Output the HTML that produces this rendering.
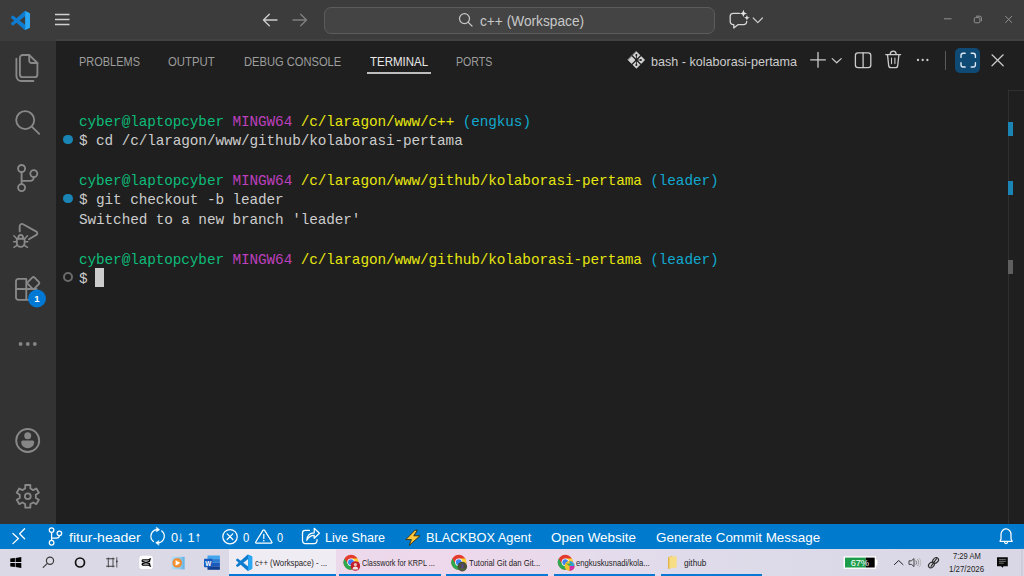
<!DOCTYPE html>
<html lang="en">
<head>
<meta charset="utf-8">
<title>c++ (Workspace)</title>
<style>
html,body{margin:0;padding:0;}
body{width:1024px;height:576px;overflow:hidden;background:#1f1f1f;position:relative;font-family:"Liberation Sans",sans-serif;color:#cccccc;}
.abs{position:absolute;}
.t{position:absolute;white-space:nowrap;transform-origin:0 0;}
.ar{display:inline-block;font-family:"DejaVu Sans",sans-serif;font-size:11.5px;width:6px;transform:scaleX(0.66);transform-origin:0 50%;}
svg{position:absolute;overflow:visible;}
/* title bar */
#title{left:0;top:0;width:1024px;height:40.5px;background:#3c3c3c;}
#search{left:324px;top:6.5px;width:391px;height:27.5px;border:1px solid #5c5c5c;border-radius:7px;background:#444444;box-sizing:border-box;}
/* activity bar */
#act{left:0;top:40.5px;width:55.5px;height:483.5px;background:#333333;}
/* panel */
#panel{left:55.5px;top:40.9px;width:968.5px;height:483.1px;background:#1f1f1f;border-top:0;}
#tabline{left:366.9px;top:72.2px;width:63.8px;height:1.6px;background:#bdbdbd;}
#maxbtn{left:955px;top:48px;width:25px;height:25px;border-radius:5px;background:#0f4a74;}
#sep{left:945px;top:51px;width:1px;height:19px;background:#5a5a5a;}
/* terminal */
.ln{left:79px;height:20px;font-family:"Liberation Mono",monospace;font-size:14.4px;line-height:20px;letter-spacing:-0.11px;white-space:pre;color:#cccccc;}
.g{color:#0dbc79}.m{color:#bc3fbc}.y{color:#e5e510}.c{color:#11a8cd}
.dot{width:9.6px;height:9.6px;border-radius:50%;background:#1a85b4;left:63.2px;}
.dot.o{background:transparent;border:2px solid #6a6a6a;box-sizing:border-box;width:9.8px;height:9.8px;}
#cursor{left:95.4px;top:267.8px;width:8.8px;height:19.6px;background:#cccccc;}
#sbline{left:1008px;top:90px;width:1px;height:434px;background:#303031;}
.mk{left:1008px;width:5px;height:14px;background:#1a85b4;}
/* status bar */
#status{left:0;top:524px;width:1024px;height:25px;background:#007acc;}
/* task bar */
#task{left:0;top:549px;width:1024px;height:27px;background:linear-gradient(90deg,#dbd9e6 0px,#dcd9e7 225px,#ecd9eb 340px,#eed8ec 450px,#e9daeb 550px,#e4dcec 600px,#dfdbea 700px,#dcdae8 800px,#d9d7e5 1024px);}
.ul{top:574px;height:2px;background:#0a78d4;}
</style>
</head>
<body>
<!-- TITLE BAR -->
<div id="title" class="abs"></div>
<div class="abs" style="left:55.5px;top:39.4px;width:968.5px;height:1.6px;background:#424242"></div>
<div id="search" class="abs"></div>

<!-- ACTIVITY BAR -->
<div id="act" class="abs"></div>

<!-- PANEL -->
<div id="panel" class="abs"></div>
<div id="tabline" class="abs"></div>
<div id="sep" class="abs"></div>
<div id="maxbtn" class="abs"></div>

<!-- TERMINAL -->
<div class="abs ln" style="top:112px"><span class="g">cyber@laptopcyber</span> <span class="m">MINGW64</span> <span class="y">/c/laragon/www/c++</span> <span class="c">(engkus)</span></div>
<div class="abs ln" style="top:131px">$ cd /c/laragon/www/github/kolaborasi-pertama</div>
<div class="abs ln" style="top:171px"><span class="g">cyber@laptopcyber</span> <span class="m">MINGW64</span> <span class="y">/c/laragon/www/github/kolaborasi-pertama</span> <span class="c">(leader)</span></div>
<div class="abs ln" style="top:190px">$ git checkout -b leader</div>
<div class="abs ln" style="top:210px">Switched to a new branch 'leader'</div>
<div class="abs ln" style="top:250px"><span class="g">cyber@laptopcyber</span> <span class="m">MINGW64</span> <span class="y">/c/laragon/www/github/kolaborasi-pertama</span> <span class="c">(leader)</span></div>
<div class="abs ln" style="top:269px">$</div>
<div id="cursor" class="abs"></div>
<div class="abs dot" style="top:134.9px"></div>
<div class="abs dot" style="top:193.9px"></div>
<div class="abs dot o" style="top:272.1px;left:63.4px"></div>
<div id="sbline" class="abs"></div>
<div class="abs" style="left:1008px;top:89.5px;width:16px;height:1px;background:#303031"></div>
<div class="abs mk" style="top:122px"></div>
<div class="abs mk" style="top:181px"></div>
<div class="abs mk" style="top:260px;background:#5f5f5f"></div>


<!-- ICONS: title + activity bar -->
<svg width="1024" height="576" viewBox="0 0 1024 576" style="left:0;top:0" fill="none" stroke-linecap="round" stroke-linejoin="round">
<!-- vscode logo -->
<g transform="translate(11,11) scale(0.19)">
<path d="M96.46 10.8 75.86.88a6.23 6.23 0 0 0-7.1 1.2L29.33 38.04 12.15 25a4.16 4.16 0 0 0-5.32.24L1.32 30.25a4.17 4.17 0 0 0 0 6.16L16.21 50 1.32 63.59a4.17 4.17 0 0 0 0 6.16l5.51 5.01a4.16 4.16 0 0 0 5.32.24l17.18-13.04 39.43 35.96a6.22 6.22 0 0 0 7.1 1.2l20.6-9.9A6.25 6.25 0 0 0 100 83.57V16.43a6.25 6.25 0 0 0-3.54-5.63ZM75 72.7 45.07 50 75 27.3Z" fill="#0f7ccf" fill-rule="evenodd"/>
<path d="M75 .5 96.46 10.8A6.25 6.25 0 0 1 100 16.43V83.57a6.25 6.25 0 0 1-3.54 5.63L75 99.5Z" fill="#2aa8f4"/>
</g>
<!-- hamburger -->
<g stroke="#cfcfcf" stroke-width="1.3" stroke-linecap="butt"><path d="M55 14.5H69.5M55 19.5H69.5M55 24.5H69.5"/></g>
<!-- arrows -->
<path d="M277 20H263.5M269.3 14.2L263.5 20L269.3 25.8" stroke="#cccccc" stroke-width="1.4"/>
<path d="M293 20H306.5M300.7 14.2L306.5 20L300.7 25.8" stroke="#7f7f7f" stroke-width="1.4"/>
<!-- search icon -->
<circle cx="464.5" cy="18.6" r="5" stroke="#c8c8c8" stroke-width="1.2"/>
<path d="M468.2 22.4L472 26" stroke="#c8c8c8" stroke-width="1.2"/>
<!-- copilot chat -->
<path d="M739.5 13.3H733.2a3 3 0 0 0 -3 3V21.6a3 3 0 0 0 3 3H733.8V28L738.2 24.6H743.7a3 3 0 0 0 3 -3V21.5" stroke="#d6d6d6" stroke-width="1.3"/>
<path d="M743.4 9.8L744.4 12.4L747 13.4L744.4 14.4L743.4 17L742.4 14.4L739.8 13.4L742.4 12.4Z" fill="#e4e4e4"/>
<path d="M746.9 15L747.7 17L749.7 17.8L747.7 18.6L746.9 20.6L746.1 18.6L744.1 17.8L746.1 17Z" fill="#e4e4e4"/>
<path d="M753.2 18L757.8 22.6L762.4 18" stroke="#cccccc" stroke-width="1.2"/>
<!-- window controls -->
<g stroke="#909090" stroke-width="1" stroke-linecap="butt">
<path d="M944 18.8H951.5"/>
<rect x="974.3" y="17.6" width="5.6" height="5.2" rx="1"/>
<path d="M976 16.2H980a1.4 1.4 0 0 1 1.4 1.4V21.3"/>
<path d="M1005.3 16L1012 22.8M1012 16L1005.3 22.8"/>
</g>
<!-- ACTIVITY BAR -->
<g stroke="#898989" stroke-width="1.85">
<!-- files -->
<path d="M22.6 55H29.2L37.4 63V74.4a2.7 2.7 0 0 1 -2.7 2.7H22.6a2.7 2.7 0 0 1 -2.7 -2.7V57.7a2.7 2.7 0 0 1 2.7 -2.7Z"/>
<path d="M29.2 55V60.6a2.4 2.4 0 0 0 2.4 2.4H37.4"/>
<path d="M16.4 58.6V76a5 5 0 0 0 5 5H33.4"/>
<!-- search -->
<circle cx="25.2" cy="120.1" r="9"/>
<path d="M31.8 126.6L39.2 133.8"/>
<!-- scm -->
<circle cx="21.6" cy="168.5" r="3.5"/><circle cx="21.6" cy="187.6" r="3.5"/><circle cx="33.8" cy="173.6" r="3.5"/>
<path d="M21.6 172V184.1M33.8 177.1V177.6a3.3 3.3 0 0 1 -3.3 3.3H21.6"/>
<!-- debug -->
<path d="M19.7 231.4V226.2a2.3 2.3 0 0 1 3.4 -2L36.4 231.6a1.9 1.9 0 0 1 0 3.3L28.9 239.2"/>
<path d="M16.8 238.7H24.6V242.7a3.9 4.2 0 0 1 -7.8 0Z"/>
<path d="M18.4 238.5V237.4a2.3 2.6 0 0 1 4.6 0V238.5"/>
<path d="M16.8 238.7L13.9 235.7M16.7 241.7H13.6M17.4 245.1L13.9 247.4M24.6 238.7L27.5 235.7M24.7 241.7H27.8M24 245.1L27.5 247.4" stroke-width="1.5"/>
<!-- extensions -->
<path d="M26.3 278.9H18.2a2.2 2.2 0 0 0 -2.2 2.2V297.6a2.2 2.2 0 0 0 2.2 2.2H34.3a2.2 2.2 0 0 0 2.2 -2.2V289H16M26.3 278.9V299.8"/>
<path d="M32.2 277.6a1.7 1.7 0 0 1 2.4 0L38.8 281.8a1.7 1.7 0 0 1 0 2.4L34.6 288.4a1.7 1.7 0 0 1 -2.4 0L28 284.2a1.7 1.7 0 0 1 0 -2.4Z"/>
<!-- account -->
<circle cx="27.7" cy="440.5" r="11.5"/>
<!-- gear -->
<path d="M25.18 488.53 L25.27 484.98 L30.33 484.98 L30.42 488.53 L33.22 490.15 L36.34 488.45 L38.87 492.83 L35.84 494.68 L35.84 497.92 L38.87 499.77 L36.34 504.15 L33.22 502.45 L30.42 504.07 L30.33 507.62 L25.27 507.62 L25.18 504.07 L22.38 502.45 L19.26 504.15 L16.73 499.77 L19.76 497.92 L19.76 494.68 L16.73 492.83 L19.26 488.45 L22.38 490.15 Z"/>
<circle cx="27.8" cy="496.3" r="2.9"/>
</g>
<g fill="#868686">
<circle cx="27.7" cy="435.8" r="3.5"/>
<path d="M21.2 442a1.5 1.5 0 0 1 1.5 -1.5H32.7a1.5 1.5 0 0 1 1.5 1.5V442.2a6.5 6 0 0 1 -13 0Z"/>
<circle cx="20.6" cy="344" r="1.9"/><circle cx="27.8" cy="344" r="1.9"/><circle cx="34.8" cy="344" r="1.9"/>
</g>
<circle cx="37" cy="298.5" r="9" fill="#0078d4"/>
<text x="37" y="301.9" font-family="Liberation Sans, sans-serif" font-weight="bold" font-size="9.5" fill="#ffffff" text-anchor="middle">1</text>
</svg>


<!-- ICONS: panel actions + status bar -->
<svg width="1024" height="576" viewBox="0 0 1024 576" style="left:0;top:0" fill="none" stroke-linecap="round" stroke-linejoin="round">
<!-- terminal (git bash) icon -->
<path d="M636.4 51.8L644.6 60L636.4 68.2L628.2 60Z" fill="#d4d4d4" stroke="#d4d4d4" stroke-width="0.8"/>
<g stroke="#1f1f1f" stroke-width="1.25" stroke-linecap="butt">
<path d="M631.9 55.5L640.9 64.5M640.9 55.5L631.9 64.5"/>
<path d="M636.4 54.4V65.6M636.4 60L640.6 60" stroke-width="0.9"/>
</g>
<g fill="#1f1f1f"><circle cx="636.4" cy="55" r="1"/><circle cx="636.4" cy="65" r="1"/><circle cx="640.9" cy="60" r="1"/><circle cx="636.4" cy="60" r="1.2"/></g>
<g stroke="#cccccc" stroke-width="1.3">
<!-- plus -->
<path d="M818 52.4V67.2M810.6 59.8H825.4"/>
<!-- chevron -->
<path d="M832.2 58.6L836.7 62.8L841.2 58.6" stroke-width="1.2"/>
<!-- split -->
<rect x="855.4" y="52.8" width="15.4" height="14.8" rx="2.6"/>
<path d="M863.1 52.8V67.6"/>
<!-- trash -->
<path d="M885.8 54.6H900.6M890.2 54.4a3 3.2 0 0 1 6 0"/>
<path d="M887.5 54.8L888.7 65.6a2.2 2.2 0 0 0 2.2 2H895.5a2.2 2.2 0 0 0 2.2 -2L898.9 54.8"/>
<path d="M891.5 58V63.6M894.9 58V63.6" stroke-width="1.1"/>
<!-- close -->
<path d="M992 54.8L1003.2 65.8M1003.2 54.8L992 65.8" stroke-width="1.2"/>
</g>
<g fill="#cccccc"><circle cx="918" cy="60" r="1.15"/><circle cx="922.7" cy="60" r="1.15"/><circle cx="927.4" cy="60" r="1.15"/></g>
<!-- maximize corners -->
<g stroke="#dbe8f2" stroke-width="1.4">
<path d="M961 57.4V55.4a2.2 2.2 0 0 1 2.2 -2.2H965.2"/>
<path d="M971.2 53.2H973.2a2.2 2.2 0 0 1 2.2 2.2V57.4"/>
<path d="M975.4 62.8V64.8a2.2 2.2 0 0 1 -2.2 2.2H971.2"/>
<path d="M965.2 67H963.2a2.2 2.2 0 0 1 -2.2 -2.2V62.8"/>
</g>
</svg>

<!-- STATUS BAR -->
<div id="status" class="abs"></div>


<svg width="1024" height="576" viewBox="0 0 1024 576" style="left:0;top:0" fill="none" stroke-linecap="round" stroke-linejoin="round">
<g stroke="#ffffff" stroke-width="1.25">
<!-- remote -->
<path d="M12.9 533.5L18.4 538.5L12.9 543.6M24.6 528.7L19.6 533.7L24.6 538.8"/>
<!-- branch -->
<circle cx="51.6" cy="530.1" r="2.3"/><circle cx="51.6" cy="542.7" r="2.3"/><circle cx="59.4" cy="533.3" r="2.3"/>
<path d="M51.6 532.5V540.3M59.4 535.7a3 2.4 0 0 1 -3 2.3H51.6"/>
<!-- sync -->
<path d="M153.48 541.48A6.7 6.7 0 0 1 156.67 529.57M161.72 530.92A6.7 6.7 0 0 1 158.53 542.83"/>
<path d="M156.60 527.30L159.60 529.70L156.60 531.70Z" fill="#ffffff" stroke-width="0.5"/>
<path d="M158.60 540.70L155.60 542.70L158.60 545.10Z" fill="#ffffff" stroke-width="0.5"/>
<!-- error -->
<circle cx="230" cy="536.7" r="7.2"/>
<path d="M227.2 533.9L232.8 539.5M232.8 533.9L227.2 539.5"/>
<!-- warning -->
<path d="M263.1 530.2a0.8 0.8 0 0 1 1.4 0L271.9 542a0.7 0.7 0 0 1 -0.6 1.1H256.3a0.7 0.7 0 0 1 -0.6 -1.1Z"/>
<path d="M263.8 534.4V538.6"/>
<!-- live share -->
<path d="M309.4 530.4H305.2a2.7 2.7 0 0 0 -2.7 2.7V540.8a2.7 2.7 0 0 0 2.7 2.7H314.3a2.7 2.7 0 0 0 2.7 -2.7V539.6"/>
<path d="M306.8 540.3C307.2 535.4 310.4 532.9 314.2 532.9V528.3L319.4 533.2L314.2 538.3V535.4C311 535.4 308.6 537 306.8 540.3Z"/>
<!-- bell -->
<path d="M1000 541.3H1012.2L1011 539V535a5 5.6 0 0 0 -10 -1V539Z"/>
<path d="M1004.6 542.4a1.5 1.5 0 0 0 2.9 0"/>
</g>
<circle cx="263.8" cy="540.7" r="0.8" fill="#ffffff"/>
<!-- lightning -->
<path d="M414.8 530.4L405.8 539.6H411.4L409.2 545.4L420 535.8H413.8L417.2 530.4Z" fill="#ffc83d" stroke="#3a2c08" stroke-width="0.9"/>
</svg>

<!-- TASK BAR -->
<div id="task" class="abs"></div>
<div class="abs" style="left:229px;top:549px;width:107px;height:27px;background:#f0ecf4"></div>
<div class="abs ul" style="left:229px;width:107px"></div>
<div class="abs ul" style="left:339px;width:101.5px"></div>
<div class="abs ul" style="left:446px;width:101.8px"></div>
<div class="abs ul" style="left:553.7px;width:101px"></div>
<div class="abs ul" style="left:660.7px;width:101.3px"></div>
<svg width="1024" height="576" viewBox="0 0 1024 576" style="left:0;top:0" fill="none" stroke-linecap="round" stroke-linejoin="round">
<!-- windows logo -->
<g fill="#000000">
<polygon points="10.3,558.6 14.9,558 14.9,562.1 10.3,562.1"/>
<polygon points="15.6,557.9 21.3,557 21.3,562.1 15.6,562.1"/>
<polygon points="10.3,562.9 14.9,562.9 14.9,567 10.3,566.4"/>
<polygon points="15.6,562.9 21.3,562.9 21.3,568 15.6,567.1"/>
</g>
<!-- search -->
<circle cx="50" cy="560.7" r="3.6" stroke="#3c3c3c" stroke-width="1.2"/>
<path d="M47.4 563.4L43.2 567.4" stroke="#3c3c3c" stroke-width="1.2"/>
<!-- cortana -->
<circle cx="80" cy="562.5" r="4.5" stroke="#111111" stroke-width="1.7"/>
<!-- task view -->
<g stroke="#3a3a3a" stroke-width="1.1" stroke-linecap="butt">
<path d="M106.2 558.7H114.6M106.2 566.2H114.6"/>
<path d="M108.3 557.6V567.3M113 557.6V567.3" stroke-width="0.9"/>
<path d="M116.8 557.2V567.5" stroke-width="0.8"/>
</g>
<circle cx="116.8" cy="561.4" r="0.9" fill="#3a3a3a"/>
<!-- capcut -->
<rect x="139.3" y="555.8" width="13.5" height="13.2" rx="2.8" fill="#ffffff"/>
<path d="M150.5 558.9L148.6 559.9H143a0.9 0.9 0 0 0 -0.5 1.6L149.4 563.6a0.9 0.9 0 0 1 -0.5 1.6H143M150.5 566.2L148.6 565.2M143 565.2a0.9 0.9 0 0 1 -0.5 -1.6L149.4 561.5a0.9 0.9 0 0 0 -0.5 -1.6" stroke="#0a0a0a" stroke-width="1.35"/>
<!-- media player -->
<defs><linearGradient id="mp" x1="0" x2="1" y1="0" y2="0"><stop offset="0" stop-color="#b4dcf3"/><stop offset="0.7" stop-color="#8cc8ea"/><stop offset="1" stop-color="#5bb0e2"/></linearGradient></defs><rect x="171.6" y="556.8" width="13" height="12.6" fill="url(#mp)"/>
<circle cx="177.2" cy="562.9" r="4.7" fill="#f0842a"/><circle cx="177.2" cy="562.9" r="3.3" fill="#f79a3c"/>
<path d="M175.7 560.3L180.2 562.9L175.7 565.5Z" fill="#ffffff"/>
<!-- word -->
<rect x="207.5" y="555.5" width="12.4" height="3.6" fill="#41a5ee"/>
<rect x="207.5" y="559.1" width="12.4" height="3.6" fill="#2b7cd3"/>
<rect x="207.5" y="562.7" width="12.4" height="3.6" fill="#185abd"/>
<rect x="207.5" y="566.3" width="12.4" height="3.5" fill="#103f91"/>
<rect x="204" y="558.8" width="8.4" height="8.4" rx="0.8" fill="#185abd"/>
<text x="208.2" y="565.6" font-family="Liberation Sans, sans-serif" font-weight="bold" font-size="6.4" fill="#ffffff" text-anchor="middle">W</text>
<!-- vscode small -->
<g transform="translate(236,554.6) scale(0.162)">
<path d="M96.46 10.8 75.86.88a6.23 6.23 0 0 0-7.1 1.2L29.33 38.04 12.15 25a4.16 4.16 0 0 0-5.32.24L1.32 30.25a4.17 4.17 0 0 0 0 6.16L16.21 50 1.32 63.59a4.17 4.17 0 0 0 0 6.16l5.51 5.01a4.16 4.16 0 0 0 5.32.24l17.18-13.04 39.43 35.96a6.22 6.22 0 0 0 7.1 1.2l20.6-9.9A6.25 6.25 0 0 0 100 83.57V16.43a6.25 6.25 0 0 0-3.54-5.63ZM75 72.7 45.07 50 75 27.3Z" fill="#0f7ccf" fill-rule="evenodd"/>
<path d="M75 .5 96.46 10.8A6.25 6.25 0 0 1 100 16.43V83.57a6.25 6.25 0 0 1-3.54 5.63L75 99.5Z" fill="#2aa8f4"/>
</g>
<!-- chrome icons -->
<g transform="translate(351,562.2)">
<circle cx="0" cy="0" r="7.5" fill="#e33b2e"/>
<path d="M-6.5 -3.75A7.5 7.5 0 0 0 0.6 7.48L3.2 1.8L-3.2 1.8Z" fill="#2da94f"/>
<path d="M6.5 -3.75H0L3.2 1.8L0.6 7.48A7.5 7.5 0 0 0 6.5 -3.75Z" fill="#fdd231"/>
<circle cx="0" cy="0" r="3.7" fill="#ffffff"/>
<circle cx="0" cy="0" r="2.9" fill="#3c82f6"/>
</g>
<g transform="translate(458.8,562.2)">
<circle cx="0" cy="0" r="7.5" fill="#e33b2e"/>
<path d="M-6.5 -3.75A7.5 7.5 0 0 0 0.6 7.48L3.2 1.8L-3.2 1.8Z" fill="#2da94f"/>
<path d="M6.5 -3.75H0L3.2 1.8L0.6 7.48A7.5 7.5 0 0 0 6.5 -3.75Z" fill="#fdd231"/>
<circle cx="0" cy="0" r="3.7" fill="#ffffff"/>
<circle cx="0" cy="0" r="2.9" fill="#3c82f6"/>
</g>
<g transform="translate(565.3,562.2)">
<circle cx="0" cy="0" r="7.5" fill="#e33b2e"/>
<path d="M-6.5 -3.75A7.5 7.5 0 0 0 0.6 7.48L3.2 1.8L-3.2 1.8Z" fill="#2da94f"/>
<path d="M6.5 -3.75H0L3.2 1.8L0.6 7.48A7.5 7.5 0 0 0 6.5 -3.75Z" fill="#fdd231"/>
<circle cx="0" cy="0" r="3.7" fill="#ffffff"/>
<circle cx="0" cy="0" r="2.9" fill="#3c82f6"/>
</g>
<!-- avatars -->
<circle cx="355.4" cy="566" r="4.8" fill="#c51f2d"/>
<circle cx="355.4" cy="564.6" r="1.6" fill="#e9c8b8"/>
<path d="M352.6 569.6a2.8 3 0 0 1 5.6 0Z" fill="#f0e6e6"/>
<circle cx="462.3" cy="566.6" r="4.8" fill="#4b4f3a"/>
<path d="M461.4 564.2h2v4.6h-2z" fill="#5a4596"/><path d="M458.4 568.6a4.8 4.8 0 0 0 7.8 0Z" fill="#56653a"/>
<circle cx="569.6" cy="566" r="5" fill="#f2c230"/>
<path d="M569.6 561A5 5 0 0 1 574.6 566H569.6Z" fill="#34a0dc"/>
<path d="M569.6 566H574.6A5 5 0 0 1 569.6 571Z" fill="#d12fa8"/>
<path d="M566 563.4L572.6 563.8L569.2 566Z" fill="#3fae4a"/>
<!-- folder -->
<path d="M668 557.2L672.4 555.8V567.6L668 569Z" fill="#e3b44a"/>
<path d="M669.4 556.8L676.7 556.2V567.4L669.4 568.4Z" fill="#f7dd83"/>
<!-- battery -->
<rect x="843.6" y="556.3" width="32.4" height="12.5" fill="#ffffff"/>
<rect x="876" y="559.6" width="1.4" height="5.8" fill="#ffffff"/>
<rect x="845" y="557.6" width="20.8" height="9.9" fill="#1d9c49"/>
<rect x="865.8" y="557.6" width="8.9" height="9.9" fill="#000000"/>
<text x="859.8" y="566.1" font-family="Liberation Sans, sans-serif" font-size="9.4" fill="#ffffff" text-anchor="middle" letter-spacing="-0.3">67%</text>
<!-- tray -->
<path d="M894.4 564.6L898.7 560.5L903 564.6" stroke="#222222" stroke-width="1"/>
<path d="M909.4 560.8H911.4L914 558.6V566.6L911.4 564.4H909.4Z" stroke="#333333" stroke-width="0.9"/>
<path d="M916 560.8a2.6 2.6 0 0 1 0 3.6" stroke="#555555" stroke-width="0.8"/>
<path d="M917.6 559.4a4.6 4.6 0 0 1 0 6.4" stroke="#8a8a8a" stroke-width="0.8"/>
<path d="M919.2 558.2a6.4 6.4 0 0 1 0 8.8" stroke="#b0b0b0" stroke-width="0.8"/>
<g stroke="#2a2a2a" stroke-width="1.1">
<ellipse cx="931.4" cy="565" rx="3.2" ry="2.4" transform="rotate(-40 931.4 565)"/>
<ellipse cx="935.6" cy="560.4" rx="3.2" ry="2.4" transform="rotate(-40 935.6 560.4)"/>
<path d="M931 566.4L936.6 558.6"/>
</g>
<!-- notifications -->
<path d="M997 557.3H1007.8V566.2H1003.6L1002.4 567.8L1001.2 566.2H997Z" fill="#0a0a0a"/>
<path d="M999 559.6H1005.8M999 561.4H1005.8M999 563.2H1003.6" stroke="#8a8a8a" stroke-width="0.8" stroke-linecap="butt"/>
<path d="M1021.9 549V576" stroke="#c2c0cc" stroke-width="1"/>
</svg>

<div class="t" id="t0" style="left:480.30px;top:12.50px;font-size:14.0px;line-height:17px;color:#c8c8c8;transform:scaleX(0.9789);">c++ (Workspace)</div>
<div class="t" id="t1" style="left:78.80px;top:53.50px;font-size:13.4px;line-height:16px;color:#9d9d9d;transform:scaleX(0.8197);">PROBLEMS</div>
<div class="t" id="t2" style="left:168.00px;top:53.50px;font-size:13.4px;line-height:16px;color:#9d9d9d;transform:scaleX(0.8466);">OUTPUT</div>
<div class="t" id="t3" style="left:243.60px;top:53.50px;font-size:13.4px;line-height:16px;color:#9d9d9d;transform:scaleX(0.8320);">DEBUG CONSOLE</div>
<div class="t" id="t4" style="left:369.70px;top:53.50px;font-size:13.4px;line-height:16px;color:#e7e7e7;transform:scaleX(0.8580);">TERMINAL</div>
<div class="t" id="t5" style="left:456.00px;top:53.50px;font-size:13.4px;line-height:16px;color:#9d9d9d;transform:scaleX(0.7910);">PORTS</div>
<div class="t" id="t6" style="left:650.70px;top:53.50px;font-size:13.6px;line-height:16px;color:#cccccc;transform:scaleX(0.9251);">bash - kolaborasi-pertama</div>
<div class="t" id="t7" style="left:68.90px;top:529.50px;font-size:13.3px;line-height:16px;color:#ffffff;transform:scaleX(1.0559);">fitur-header</div>
<div class="t" id="t8" style="left:171.00px;top:529.50px;font-size:13.3px;line-height:16px;color:#ffffff;transform:scaleX(0.9591);">0<span class="ar">↓</span> 1<span class="ar">↑</span></div>
<div class="t" id="t9" style="left:243.30px;top:529.50px;font-size:13.3px;line-height:16px;color:#ffffff;transform:scaleX(0.8506);">0</div>
<div class="t" id="t10" style="left:277.20px;top:529.50px;font-size:13.3px;line-height:16px;color:#ffffff;transform:scaleX(0.8236);">0</div>
<div class="t" id="t11" style="left:324.70px;top:529.50px;font-size:13.3px;line-height:16px;color:#ffffff;transform:scaleX(0.9453);">Live Share</div>
<div class="t" id="t12" style="left:426.40px;top:529.50px;font-size:13.3px;line-height:16px;color:#ffffff;transform:scaleX(0.9616);">BLACKBOX Agent</div>
<div class="t" id="t13" style="left:551.00px;top:529.50px;font-size:13.3px;line-height:16px;color:#ffffff;transform:scaleX(1.0117);">Open Website</div>
<div class="t" id="t14" style="left:655.70px;top:529.50px;font-size:13.3px;line-height:16px;color:#ffffff;transform:scaleX(1.0093);">Generate Commit Message</div>
<div class="t" id="t15" style="left:254.80px;top:557.50px;font-size:8.8px;line-height:11px;color:#1e1e1e;transform:scaleX(0.8808);">c++ (Workspace) - ...</div>
<div class="t" id="t16" style="left:361.80px;top:557.50px;font-size:8.8px;line-height:11px;color:#1e1e1e;transform:scaleX(0.8258);">Classwork for KRPL ...</div>
<div class="t" id="t17" style="left:469.20px;top:557.50px;font-size:8.8px;line-height:11px;color:#1e1e1e;transform:scaleX(0.8807);">Tutorial Git dan Git...</div>
<div class="t" id="t18" style="left:576.10px;top:557.50px;font-size:8.8px;line-height:11px;color:#1e1e1e;transform:scaleX(0.8711);">engkuskusnadi/kola...</div>
<div class="t" id="t19" style="left:683.50px;top:557.50px;font-size:8.8px;line-height:11px;color:#1e1e1e;transform:scaleX(0.9304);">github</div>
<div class="t" id="t20" style="left:952.50px;top:550.50px;font-size:8.8px;line-height:11px;color:#1e1e1e;transform:scaleX(0.8612);">7:29 AM</div>
<div class="t" id="t21" style="left:949.10px;top:563.50px;font-size:8.8px;line-height:11px;color:#1e1e1e;transform:scaleX(0.8968);">1/27/2026</div>
</body>
</html>
